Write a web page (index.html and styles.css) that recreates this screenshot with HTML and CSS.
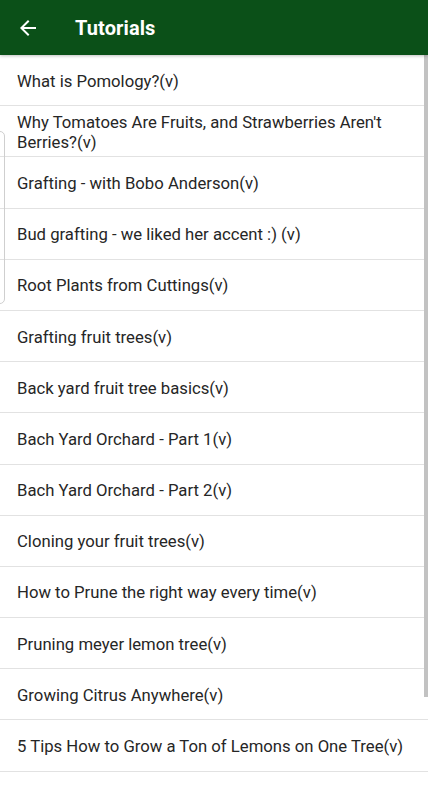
FILE: index.html
```html
<!DOCTYPE html>
<html lang="en">
<head>
    <meta charset="UTF-8">
    <meta name="viewport" content="width=device-width, initial-scale=1.0">
    <title>Tutorials</title>
    <link rel="stylesheet" href="styles.css">
</head>
<body>
    <div class="app">
        <header class="toolbar">
            <button class="back-btn" aria-label="Back">
                <svg width="24" height="24" viewBox="0 0 24 24">
                    <path d="M20 11H7.83l5.59-5.59L12 4l-8 8 8 8 1.41-1.41L7.83 13H20v-2z" fill="#fff"/>
                </svg>
            </button>
            <h1 class="title">Tutorials</h1>
        </header>
        <ul class="tutorial-list">
            <li class="item">What is Pomology?(v)</li>
            <li class="item">Why Tomatoes Are Fruits, and Strawberries Aren't Berries?(v)</li>
            <li class="item">Grafting - with Bobo Anderson(v)</li>
            <li class="item">Bud grafting - we liked her accent :) (v)</li>
            <li class="item">Root Plants from Cuttings(v)</li>
            <li class="item">Grafting fruit trees(v)</li>
            <li class="item">Back yard fruit tree basics(v)</li>
            <li class="item">Bach Yard Orchard - Part 1(v)</li>
            <li class="item">Bach Yard Orchard - Part 2(v)</li>
            <li class="item">Cloning your fruit trees(v)</li>
            <li class="item">How to Prune the right way every time(v)</li>
            <li class="item">Pruning meyer lemon tree(v)</li>
            <li class="item">Growing Citrus Anywhere(v)</li>
            <li class="item">5 Tips How to Grow a Ton of Lemons on One Tree(v)</li>
        </ul>
        <div class="side-tab"></div>
        <div class="scroll-thumb"></div>
    </div>
</body>
</html>
```

FILE: styles.css
```css
body {
    margin: 0;
    padding: 0;
    background-color: #fff;
    font-family: Roboto, "Liberation Sans", sans-serif;
    color: #222;
}
.app {
    position: relative;
    width: 428px;
    height: 800px;
    overflow: hidden;
    background-color: #fff;
}
.toolbar {
    position: relative;
    z-index: 2;
    display: flex;
    align-items: center;
    height: 55px;
    padding: 0 16px;
    background-color: #0b5018; /* dark green bar */
    box-shadow: 0 1px 3px rgba(0, 0, 0, 0.25);
}
.back-btn {
    display: flex;
    width: 24px;
    height: 24px;
    padding: 0;
    margin: 0 35px 0 0;
    border: none;
    background: none;
}
.title {
    margin: 0;
    color: #fff;
    font-size: 20px;
    font-weight: bold;
    letter-spacing: 0.1px;
}
.tutorial-list {
    list-style: none;
    margin: 0;
    padding: 0;
}
.item {
    box-sizing: border-box;
    display: flex;
    align-items: center;
    min-height: 51.2px;
    padding: 3px 17px 0;
    border-bottom: 1.2px solid #e2e2e2;
    font-size: 16.7px;
    font-weight: 400;
    line-height: 20px;
    color: #262626;
}
.side-tab {
    position: absolute;
    left: -20px;
    top: 131px;
    width: 23px;
    height: 171px;
    border: 1px solid #cfcfcf;
    border-radius: 5px;
}
.scroll-thumb {
    position: absolute;
    right: 0;
    top: 55px;
    width: 4px;
    height: 642px;
    background-color: #c2c2c2;
}
```
